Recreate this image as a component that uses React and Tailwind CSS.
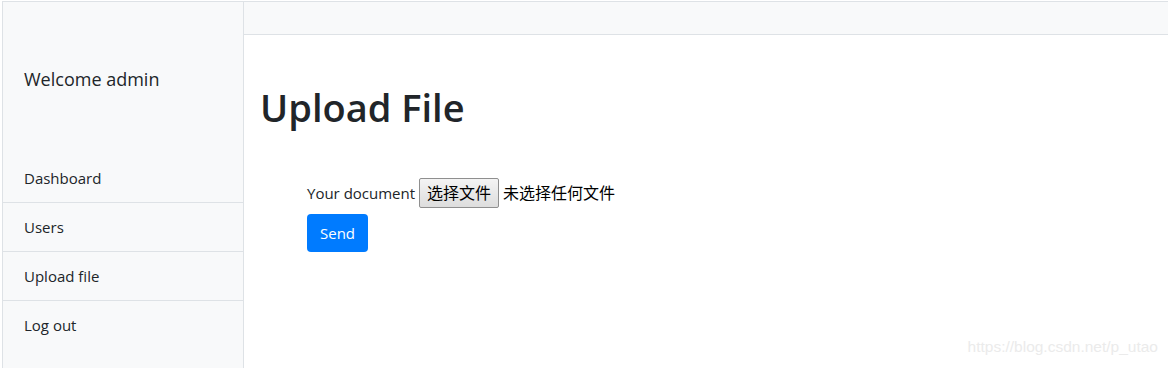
import React from "react";

const links = ["Dashboard", "Users", "Upload file", "Log out"];

const App = () => {
  return (
    <div
      className="relative w-[1168px] h-[368px] bg-white text-[#212529] overflow-hidden"
      style={{ fontFamily: '"Open Sans", "Noto Sans CJK SC", sans-serif' }}
    >
      <div className="flex h-full mt-px ml-[2px] border-t border-l border-[#dee2e6]">
        {/* sidebar */}
        <div className="w-[241px] shrink-0 bg-[#f8f9fa] border-r border-[#dee2e6]">
          <div className="h-[152px] pl-[21px] pt-[64px] text-[18px] leading-[27px]">
            Welcome admin
          </div>
          <div>
            {links.map((link, i) => (
              <div
                key={link}
                className={`h-[49px] pl-[21px] flex items-center text-[15px] ${
                  i < links.length - 1 ? "border-b border-[#dee2e6]" : ""
                }`}
              >
                {link}
              </div>
            ))}
          </div>
        </div>

        {/* main */}
        <div className="flex-1 flex flex-col">
          <div className="h-[33px] bg-[#f8f9fa] border-b border-[#dee2e6]"></div>
          <div className="pl-[16px] pt-[48px]">
            <h1 className="text-[38px] leading-[48px] font-semibold">Upload File</h1>
            <form className="pl-[47px] pt-[47px]">
              <div className="flex items-center h-[30px] text-[15px]">
                <span className="mr-[4px]">Your document</span>
                <button
                  type="button"
                  className="h-[30px] px-[7px] border border-[#8f8f8f] rounded-[2px] bg-gradient-to-b from-[#f4f4f4] to-[#dddddd] text-[16px] text-black"
                >
                  选择文件
                </button>
                <span className="ml-[4px] text-[16px] text-black">未选择任何文件</span>
              </div>
              <button
                type="button"
                className="mt-[6px] h-[38px] w-[61px] rounded-[4px] bg-[#007bff] text-white text-[15px]"
              >
                Send
              </button>
            </form>
          </div>
        </div>
      </div>

      <div
        className="absolute right-[10px] bottom-[10px] text-[15.5px] text-[#ebebeb]"
        style={{ fontFamily: '"Liberation Sans", sans-serif' }}
      >
        https://blog.csdn.net/p_utao
      </div>
    </div>
  );
};

export default App;
